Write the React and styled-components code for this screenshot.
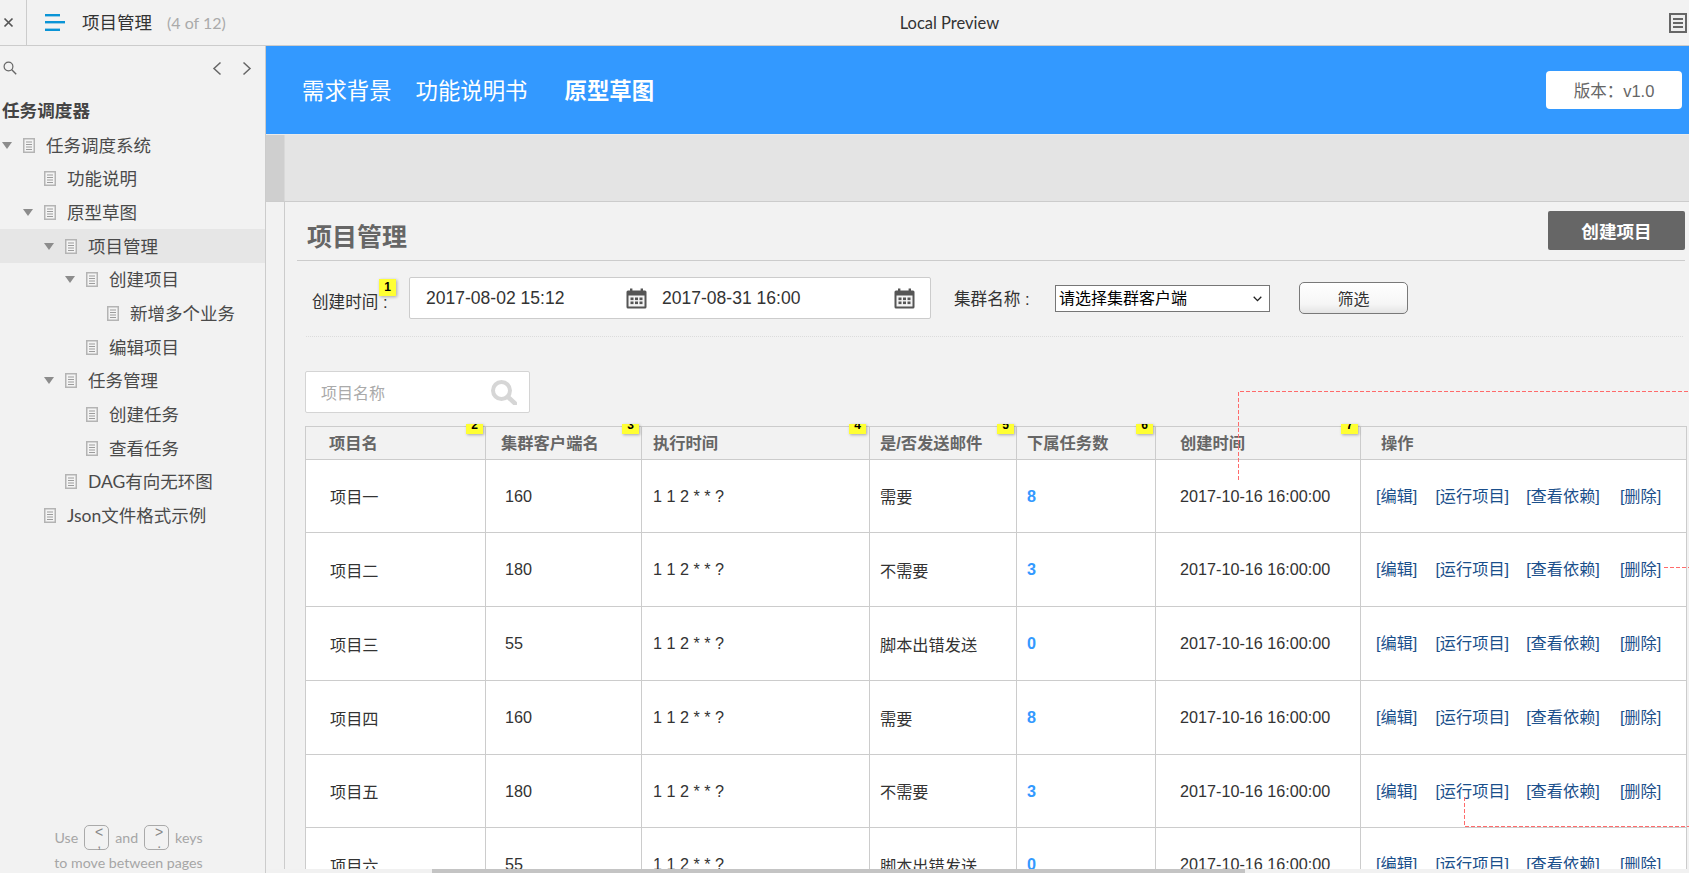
import React from 'react';
import styled, { createGlobalStyle } from 'styled-components';

const Global = createGlobalStyle`
  html, body { margin: 0; padding: 0; height: 100%; overflow: hidden; background: #f2f2f2; }
  #root { height: 100%; }
  * { box-sizing: border-box; }
`;

const cjk = '"Noto Sans CJK SC", sans-serif';
const arial = `"Liberation Sans", ${cjk}`;
const ui = `Lato, ${cjk}`;

const Page = styled.div`
  position: relative;
  width: 1689px;
  height: 873px;
  display: flex;
  flex-direction: column;
  overflow: hidden;
  background: #f2f2f2;
  font-family: ${arial};
`;

const TopBar = styled.header`
  height: 46px;
  flex: none;
  display: flex;
  align-items: center;
  background: #f2f2f2;
  border-bottom: 1px solid #ccc;
  font-family: ${ui};
`;
const CloseCell = styled.div`
  width: 27px;
  height: 45px;
  flex: none;
  display: flex;
  align-items: center;
  padding-left: 3px;
  border-right: 1px solid #ccc;
`;
const MenuIcon = styled.svg`
  width: 20px;
  height: 17px;
  margin-left: 18px;
  flex: none;
`;
const PageTitle = styled.span`
  margin-left: 17px;
  font-size: 17.5px;
  line-height: 24px;
  color: #333;
`;
const PageCount = styled.span`
  margin-left: 15px;
  font-size: 16px;
  line-height: 24px;
  color: #aaa;
`;
const PreviewLabel = styled.span`
  flex: 1;
  text-align: center;
  padding-left: 4px;
  font-size: 16.5px;
  color: #333;
`;
const ListIcon = styled.svg`
  width: 18px;
  height: 20px;
  margin-right: 2px;
  flex: none;
`;

const Columns = styled.div`
  flex: 1;
  min-height: 0;
  display: flex;
`;

const Sidebar = styled.aside`
  width: 266px;
  flex: none;
  display: flex;
  flex-direction: column;
  border-right: 1px solid #ccc;
  background: #f2f2f2;
  font-family: ${ui};
`;
const SearchRow = styled.div`
  height: 48.5px;
  flex: none;
  display: flex;
  align-items: center;
  padding: 0 13px 4.5px 3px;
`;
const Pager = styled.div`
  margin-left: auto;
  display: flex;
  gap: 20px;
`;
const TreeTitle = styled.div`
  height: 33.7px;
  padding-left: 2px;
  font-size: 17.6px;
  font-weight: 700;
  line-height: 31.7px;
  color: #444;
`;
const TreeRow = styled.div`
  height: 33.7px;
  display: flex;
  align-items: center;
  padding-left: ${p => 2 + p.$level * 21}px;
  background: ${p => (p.$active ? '#e6e6e6' : 'transparent')};
  font-size: 17.5px;
  color: #4a4a4a;
`;
const TreeLabel = styled.span`
  margin-top: -2px;
`;
const ArrowSlot = styled.span`
  width: 21px;
  flex: none;
  display: flex;
`;
const Arrow = styled.span`
  width: 0;
  height: 0;
  border-left: 5px solid transparent;
  border-right: 5px solid transparent;
  border-top: 7px solid #8c8c8c;
`;
const DocSvg = styled.svg`
  width: 12px;
  height: 15px;
  margin-right: 11px;
  flex: none;
`;
const Hint = styled.div`
  margin-top: auto;
  margin-bottom: -2px;
  padding-right: 8px;
  text-align: center;
  color: #a6a6a6;
  font-size: 14.2px;
`;
const HintLine = styled.div`
  height: 25px;
  display: flex;
  align-items: center;
  justify-content: center;
  gap: 6px;
`;
const Key = styled.span`
  width: 25px;
  height: 25px;
  border: 1px solid #aaa;
  border-radius: 5px;
  padding: 1px 0 0 5px;
  font: 14px/11px "Liberation Sans", sans-serif;
  color: #888;
  white-space: pre;
`;

const Main = styled.main`
  flex: 1;
  min-width: 0;
  display: flex;
  flex-direction: column;
`;
const Banner = styled.div`
  height: 88px;
  flex: none;
  display: flex;
  align-items: center;
  padding: 0 7px 2px 36px;
  background: #3399ff;
  color: #fff;
`;
const NavItem = styled.span`
  font-size: 22.4px;
  font-weight: ${p => (p.$active ? 700 : 400)};
  margin-right: ${p => p.$gap}px;
`;
const VersionTag = styled.div`
  margin-left: auto;
  width: 136px;
  height: 38px;
  margin-top: 2px;
  background: #fff;
  border-radius: 4px;
  display: flex;
  align-items: center;
  justify-content: center;
  font-size: 16.5px;
  color: #666;
`;
const Band = styled.div`
  height: 68px;
  flex: none;
  display: flex;
  background: #e4e4e4;
  border-top: 1px solid #eaeaea;
  border-bottom: 1px solid #ccc;
`;
const BandStrip = styled.div`
  width: 19px;
  background: #cfcfcf;
  border-right: 1px solid #d9d9d9;
`;
const Body = styled.div`
  flex: 1;
  min-height: 0;
  overflow: hidden;
  margin-left: 18px;
  border-left: 1px solid #ccc;
`;
const TitleRow = styled.div`
  height: 59px;
  margin: 0 4px 0 12px;
  padding-left: 10px;
  display: flex;
  align-items: flex-start;
  justify-content: space-between;
  border-bottom: 1px solid #ccc;
`;
const Heading = styled.h1`
  margin: 18px 0 0;
  font-size: 25px;
  line-height: 34px;
  font-weight: 700;
  color: #666;
`;
const CreateButton = styled.button`
  width: 137px;
  height: 39px;
  margin-top: 9px;
  border: 0;
  border-radius: 2px;
  background: #666;
  color: #fff;
  font: 700 17.6px ${arial};
`;
const FilterRow = styled.div`
  height: 76px;
  margin: 0 6px 0 21px;
  padding: 0 0 1px 6px;
  display: flex;
  align-items: center;
  border-bottom: 1px dotted #dcdcdc;
`;
const FieldLabel = styled.label`
  position: relative;
  width: ${p => p.$w}px;
  margin-left: ${p => p.$ml || 0}px;
  padding-top: ${p => p.$pt || 0}px;
  flex: none;
  font-size: 16.6px;
  color: #333;
`;
const DateBox = styled.div`
  width: 522px;
  height: 42px;
  flex: none;
  display: flex;
  align-items: center;
  padding-left: 16px;
  background: #fff;
  border: 1px solid #ccc;
  border-radius: 2px;
`;
const DateText = styled.span`
  width: ${p => p.$w}px;
  flex: none;
  font-size: 17.55px;
  color: #333;
`;
const CalendarSvg = styled.svg`
  width: 21px;
  height: 21px;
  flex: none;
  margin-right: ${p => p.$mr}px;
`;
const SelectWrap = styled.div`
  position: relative;
  width: 215px;
  height: 27px;
  flex: none;
`;
const ClusterSelect = styled.select`
  width: 100%;
  height: 100%;
  padding: 0 0 0 3px;
  appearance: none;
  background: #fff;
  border: 1px solid #767676;
  border-radius: 0;
  font: 16px ${arial};
  color: #000;
`;
const SelectChevron = styled.svg`
  position: absolute;
  top: 11px;
  right: 8px;
  width: 9px;
  height: 6px;
  pointer-events: none;
`;
const FilterButton = styled.button`
  width: 109px;
  height: 32px;
  margin-left: 29px;
  flex: none;
  border: 1px solid #797979;
  border-radius: 5px;
  background: linear-gradient(#fff, #f6f6f6 70%, #e4e4e4);
  font: 16px ${arial};
  color: #333;
`;
const SearchBox = styled.div`
  width: 225px;
  height: 42px;
  margin: 34px 0 0 20px;
  padding: 0 12px 0 15px;
  display: flex;
  align-items: center;
  justify-content: space-between;
  background: #fff;
  border: 1px solid #d4d4d4;
  border-radius: 2px;
  font-size: 16px;
  color: #aaa;
`;
const Grid = styled.table`
  margin: 13px 0 0 20px;
  width: 1381px;
  table-layout: fixed;
  border-collapse: collapse;
  background: #fff;
`;
const HeadRow = styled.tr`
  height: 33px;
`;
const HeadCell = styled.th`
  position: relative;
  padding: 0 0 2px ${p => p.$pad}px;
  background: #f2f2f2;
  border: 1px solid #ccc;
  font-size: 16.3px;
  font-weight: 700;
  text-align: left;
  color: #666;
`;
const BodyRow = styled.tr`
  height: ${p => p.$h}px;
`;
const Cell = styled.td`
  padding: 0 0 0 ${p => p.$pad}px;
  border: 1px solid #ccc;
  font-size: 16.2px;
  color: #333;
  white-space: nowrap;
`;
const Count = styled.b`
  color: #3399ff;
`;
const Actions = styled.div`
  display: flex;
  margin-top: -3px;
`;
const ActionLink = styled.a`
  margin-right: ${p => p.$gap}px;
  color: #1a4f8b;
`;
const Note = styled.span`
  position: absolute;
  z-index: 2;
  width: 17px;
  background: #ffff33;
  box-shadow: 1px 1px 3px rgba(0, 0, 0, 0.3);
  font: 700 12px ${arial};
  color: #000;
  text-align: center;
`;
const FullNote = styled(Note)`
  height: 17px;
  top: -5px;
  right: 13px;
  line-height: 17px;
`;
const ClippedNote = styled(Note)`
  height: 10px;
  top: -3px;
  right: ${p => p.$right}px;
  line-height: 2px;
  overflow: hidden;
`;
const Connectors = styled.svg`
  position: absolute;
  top: 0;
  left: 0;
  width: 1689px;
  height: 869px;
  z-index: 3;
  pointer-events: none;
`;
const ScrollTrack = styled.div`
  height: 4px;
  flex: none;
  padding-left: 166px;
  background: #f1f1f1;
`;
const ScrollThumb = styled.div`
  width: 813px;
  height: 4px;
  background: #c4c4c4;
`;

const Doc = () => (
  <DocSvg viewBox="0 0 12 15">
    <rect x="0.75" y="0.75" width="10.5" height="13.5" fill="#f4f4f4" stroke="#b4b4b4" strokeWidth="1.5" />
    <path d="M3 4h6M3 6.5h6M3 9h6M3 11.5h6" stroke="#9c9c9c" strokeWidth="1.1" />
  </DocSvg>
);

const Chevron = ({ dir }) => (
  <svg width="10" height="15" viewBox="0 0 10 15">
    <polyline
      points={dir === 'left' ? '8.5,1.5 2,7.5 8.5,13.5' : '1.5,1.5 8,7.5 1.5,13.5'}
      fill="none"
      stroke="#666"
      strokeWidth="1.5"
    />
  </svg>
);

const Calendar = ({ mr }) => (
  <CalendarSvg $mr={mr} viewBox="0 0 21 21">
    <rect x="0.5" y="2.5" width="20" height="18" rx="1.5" fill="#555" />
    <rect x="2.5" y="7.5" width="16" height="11" fill="#f4f4f4" />
    <rect x="4" y="0.5" width="2.4" height="4" fill="#555" />
    <rect x="14.6" y="0.5" width="2.4" height="4" fill="#555" />
    {[4.5, 9, 13.5].flatMap(x =>
      [9.5, 13.5].map(y => <rect key={`${x}-${y}`} x={x} y={y} width="3" height="2.6" fill="#555" />)
    )}
  </CalendarSvg>
);

const tree = [
  { label: '任务调度系统', level: 0, arrow: true },
  { label: '功能说明', level: 1 },
  { label: '原型草图', level: 1, arrow: true },
  { label: '项目管理', level: 2, arrow: true, active: true },
  { label: '创建项目', level: 3, arrow: true },
  { label: '新增多个业务', level: 4 },
  { label: '编辑项目', level: 3 },
  { label: '任务管理', level: 2, arrow: true },
  { label: '创建任务', level: 3 },
  { label: '查看任务', level: 3 },
  { label: 'DAG有向无环图', level: 2 },
  { label: 'Json文件格式示例', level: 1 },
];

const columns = [
  { title: '项目名', width: 180, th: 23, td: 24, note: 2, right: 2 },
  { title: '集群客户端名', width: 156, th: 15, td: 19, note: 3, right: 2 },
  { title: '执行时间', width: 228, th: 11, td: 11, note: 4, right: 3 },
  { title: '是/否发送邮件', width: 147, th: 10, td: 10, note: 5, right: 2 },
  { title: '下属任务数', width: 139, th: 10, td: 10, note: 6, right: 2 },
  { title: '创建时间', width: 205, th: 24, td: 24, note: 7, right: 2 },
  { title: '操作', width: 326, th: 20, td: 15 },
];

const rows = [
  { name: '项目一', cluster: '160', mail: '需要', count: 8, h: 73 },
  { name: '项目二', cluster: '180', mail: '不需要', count: 3, h: 74 },
  { name: '项目三', cluster: '55', mail: '脚本出错发送', count: 0, h: 74 },
  { name: '项目四', cluster: '160', mail: '需要', count: 8, h: 74 },
  { name: '项目五', cluster: '180', mail: '不需要', count: 3, h: 73 },
  { name: '项目六', cluster: '55', mail: '脚本出错发送', count: 0, h: 74 },
];

const actions = [
  { label: '[编辑]', gap: 18 },
  { label: '[运行项目]', gap: 17 },
  { label: '[查看依赖]', gap: 20 },
  { label: '[删除]', gap: 0 },
];

export default function App() {
  return (
    <Page>
      <Global />
      <TopBar>
        <CloseCell>
          <svg width="11" height="11" viewBox="0 0 11 11">
            <path d="M1.5 1.5l8 8M9.5 1.5l-8 8" stroke="#555" strokeWidth="1.7" />
          </svg>
        </CloseCell>
        <MenuIcon viewBox="0 0 20 17">
          <rect x="0" y="0" width="15" height="2.4" fill="#0a94d6" />
          <rect x="0" y="7" width="20" height="2.4" fill="#0a94d6" />
          <rect x="0" y="14.6" width="15" height="2.4" fill="#0a94d6" />
        </MenuIcon>
        <PageTitle>项目管理</PageTitle>
        <PageCount>(4 of 12)</PageCount>
        <PreviewLabel>Local Preview</PreviewLabel>
        <ListIcon viewBox="0 0 18 20">
          <rect x="1" y="1" width="16" height="18" fill="#eee" stroke="#666" strokeWidth="2" />
          <path d="M4 6h10M4 10h10M4 14h10" stroke="#666" strokeWidth="2" />
        </ListIcon>
      </TopBar>
      <Columns>
        <Sidebar>
          <SearchRow>
            <svg width="14" height="14" viewBox="0 0 14 14">
              <circle cx="5.5" cy="5.5" r="4.4" fill="none" stroke="#666" strokeWidth="1.2" />
              <path d="M8.8 8.8l4.4 4.4" stroke="#666" strokeWidth="1.4" />
            </svg>
            <Pager>
              <Chevron dir="left" />
              <Chevron dir="right" />
            </Pager>
          </SearchRow>
          <TreeTitle>任务调度器</TreeTitle>
          {tree.map(item => (
            <TreeRow key={item.label} $level={item.level} $active={item.active}>
              <ArrowSlot>{item.arrow && <Arrow />}</ArrowSlot>
              <Doc />
              <TreeLabel>{item.label}</TreeLabel>
            </TreeRow>
          ))}
          <Hint>
            <HintLine>
              Use <Key>{'<\n,'}</Key> and <Key>{'>\n.'}</Key> keys
            </HintLine>
            <HintLine>to move between pages</HintLine>
          </Hint>
        </Sidebar>
        <Main>
          <Banner>
            <NavItem $gap={24}>需求背景</NavItem>
            <NavItem $gap={37}>功能说明书</NavItem>
            <NavItem $active $gap={0}>原型草图</NavItem>
            <VersionTag>版本：v1.0</VersionTag>
          </Banner>
          <Band>
            <BandStrip />
          </Band>
          <Body>
            <TitleRow>
              <Heading>项目管理</Heading>
              <CreateButton>创建项目</CreateButton>
            </TitleRow>
            <FilterRow>
              <FieldLabel $w={97} $pt={5}>
                创建时间 :
                <FullNote>1</FullNote>
              </FieldLabel>
              <DateBox>
                <DateText $w={200}>2017-08-02 15:12</DateText>
                <Calendar mr={15} />
                <DateText $w={232}>2017-08-31 16:00</DateText>
                <Calendar mr={0} />
              </DateBox>
              <FieldLabel $w={101} $ml={23}>集群名称 :</FieldLabel>
              <SelectWrap>
                <ClusterSelect defaultValue="">
                  <option value="">请选择集群客户端</option>
                </ClusterSelect>
                <SelectChevron viewBox="0 0 9 6">
                  <path d="M0.7 0.7L4.5 4.6L8.3 0.7" fill="none" stroke="#222" strokeWidth="1.3" />
                </SelectChevron>
              </SelectWrap>
              <FilterButton>筛选</FilterButton>
            </FilterRow>
            <SearchBox>
              项目名称
              <svg width="27" height="25" viewBox="0 0 27 25">
                <circle cx="11.5" cy="10.5" r="8.5" fill="none" stroke="#d6d6d6" strokeWidth="4" />
                <path d="M18 17l7 6.5" stroke="#d6d6d6" strokeWidth="4.5" strokeLinecap="round" />
              </svg>
            </SearchBox>
            <Grid>
              <colgroup>
                {columns.map(c => <col key={c.title} width={c.width} />)}
              </colgroup>
              <thead>
                <HeadRow>
                  {columns.map(c => (
                    <HeadCell key={c.title} $pad={c.th}>
                      {c.title}
                      {c.note && <ClippedNote $right={c.right}>{c.note}</ClippedNote>}
                    </HeadCell>
                  ))}
                </HeadRow>
              </thead>
              <tbody>
                {rows.map(r => (
                  <BodyRow key={r.name} $h={r.h}>
                    <Cell $pad={columns[0].td}>{r.name}</Cell>
                    <Cell $pad={columns[1].td}>{r.cluster}</Cell>
                    <Cell $pad={columns[2].td}>1 1 2 * * ?</Cell>
                    <Cell $pad={columns[3].td}>{r.mail}</Cell>
                    <Cell $pad={columns[4].td}><Count>{r.count}</Count></Cell>
                    <Cell $pad={columns[5].td}>2017-10-16 16:00:00</Cell>
                    <Cell $pad={columns[6].td}>
                      <Actions>
                        {actions.map(a => (
                          <ActionLink key={a.label} $gap={a.gap}>{a.label}</ActionLink>
                        ))}
                      </Actions>
                    </Cell>
                  </BodyRow>
                ))}
              </tbody>
            </Grid>
          </Body>
          <ScrollTrack>
            <ScrollThumb />
          </ScrollTrack>
        </Main>
      </Columns>
      <Connectors viewBox="0 0 1689 869">
        <g fill="none" stroke="#ff6b6b" strokeWidth="1" strokeDasharray="4 2">
          <path d="M1238.5 480V391.5H1689" />
          <path d="M1664 567.5H1689" />
          <path d="M1464.5 797V826.5H1689" />
        </g>
      </Connectors>
    </Page>
  );
}
